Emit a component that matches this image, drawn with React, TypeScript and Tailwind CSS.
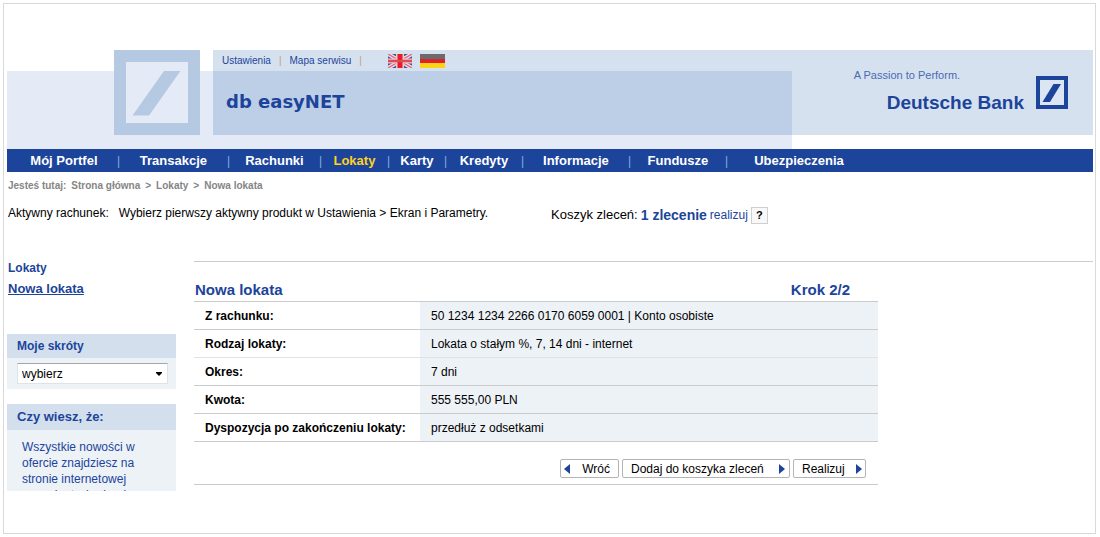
import type { ReactNode } from 'react';

const navItems = [
  { label: 'Mój Portfel', width: 'w-[113px]' },
  { label: 'Transakcje', width: 'w-[110px]' },
  { label: 'Rachunki', width: 'w-[92px]' },
  { label: 'Lokaty', width: 'w-[68px]', active: true },
  { label: 'Karty', width: 'w-[57px]' },
  { label: 'Kredyty', width: 'w-[77px]' },
  { label: 'Informacje', width: 'w-[107px]' },
  { label: 'Fundusze', width: 'w-[97px]' },
  { label: 'Ubezpieczenia', width: 'w-[142px]' },
];

const rows = [
  { label: 'Z rachunku:', value: '50 1234 1234 2266 0170 6059 0001 | Konto osobiste', line: 'border-[#cbcbcb]' },
  { label: 'Rodzaj lokaty:', value: 'Lokata o stałym %, 7, 14 dni - internet', line: 'border-[#e0e2e4]' },
  { label: 'Okres:', value: '7 dni', line: 'border-[#cbcbcb]' },
  { label: 'Kwota:', value: '555 555,00 PLN', line: 'border-[#cbcbcb]' },
  { label: 'Dyspozycja po zakończeniu lokaty:', value: 'przedłuż z odsetkami', line: 'border-[#cbcbcb]' },
];

const UkFlag = () => (
  <svg viewBox="0 0 24 14" className="h-[14px] w-6" aria-hidden="true">
    <rect width="24" height="14" fill="#4a5299" />
    <path d="M0 0L24 14M24 0L0 14" stroke="#ecdfe8" strokeWidth="4" />
    <path d="M0 0L24 14M24 0L0 14" stroke="#dc6a78" strokeWidth="1.3" />
    <path d="M12 0V14" stroke="#efc4cb" strokeWidth="8" />
    <path d="M0 7H24" stroke="#efc4cb" strokeWidth="5" />
    <path d="M12 0V14" stroke="#e02028" strokeWidth="5" />
    <path d="M0 7H24" stroke="#e04a54" strokeWidth="2.5" />
  </svg>
);

const DeFlag = () => (
  <svg viewBox="0 0 25 14" className="h-[14px] w-[25px]" aria-hidden="true">
    <rect width="25" height="5" fill="#6b6b6b" />
    <rect y="5" width="25" height="4" fill="#e0202c" />
    <rect y="9" width="25" height="5" fill="#fbd416" />
  </svg>
);

const Arrow = ({ left = false }: { left?: boolean }) => (
  <svg viewBox="0 0 6 10" className="h-[10px] w-[6px] shrink-0" aria-hidden="true">
    <path d={left ? 'M6 0V10L0 5Z' : 'M0 0V10L6 5Z'} fill="#1c449b" />
  </svg>
);

const ActionButton = ({ children, className }: { children: ReactNode; className: string }) => (
  <button
    type="button"
    className={`flex h-[19px] items-center justify-between rounded-[2px] border border-[#b4b4b4] bg-white text-black ${className}`}
  >
    {children}
  </button>
);

const Header = () => (
  <header className="grid grid-cols-[206px_579px_1fr] grid-rows-[21px_64px_14px] text-[#1c449b]">
    <div className="col-start-1 row-span-2 row-start-2 bg-[#e4ebf6]" />
    <div className="z-10 col-start-1 row-span-2 row-start-1 flex justify-end pr-[13px]">
      <svg viewBox="0 0 86 85" className="h-[85px] w-[86px]" aria-hidden="true">
        <rect width="86" height="85" fill="#b5c9e2" />
        <rect x="12" y="12" width="62" height="61" fill="#e4ebf6" />
        <path d="M50 21H66.500L35 65.500H18.500Z" fill="#b5c9e2" />
      </svg>
    </div>

    <div className="col-start-2 row-start-1 flex items-center bg-[#d6e1ef] pl-[9px] text-[10px]">
      <a href="#ustawienia">Ustawienia</a>
      <span className="mx-2 text-[#c0a080]">|</span>
      <a href="#mapa">Mapa serwisu</a>
      <span className="mx-2 text-[#c0a080]">|</span>
      <a href="#en" aria-label="English" className="ml-[18px]"><UkFlag /></a>
      <a href="#de" aria-label="Deutsch" className="ml-2"><DeFlag /></a>
    </div>
    <div className="col-start-2 row-start-2 flex items-center bg-[#bdcfe6] pb-[2px] pl-[13px] font-['DejaVu_Sans'] text-[18px] font-bold">
      db easyNET
    </div>
    <div className="col-start-2 row-start-3 bg-[#e4ebf6]" />

    <div className="col-start-3 row-span-2 row-start-1 flex justify-end gap-3 bg-[#d6e1ef] pr-[25px] pt-[18px]">
      <div className="whitespace-nowrap">
        <p className="-ml-[33px] text-[11px] leading-[14px] text-[#4a6bb3]">A Passion to Perform.</p>
        <p className="mt-[9px] text-[19px] font-bold leading-[24px]">Deutsche Bank</p>
      </div>
      <svg viewBox="0 0 32 33" className="mt-2 h-[33px] w-8" aria-hidden="true">
        <rect x="2" y="2" width="28" height="29" fill="#dce6f3" stroke="#1c449b" strokeWidth="4" />
        <path d="M17.500 8H25L14 26H6.500Z" fill="#1c449b" />
      </svg>
    </div>
  </header>
);

const NavBar = () => (
  <nav className="bg-[#1c449b]">
    <ul className="flex h-[23px] items-center text-[13px] font-bold text-white">
      {navItems.map((item, idx) => (
        <li key={item.label} className={`flex items-center ${item.width}`}>
          <a href="#nav" className={`flex-1 text-center ${item.active ? 'text-[#ffd320]' : ''} ${idx === 0 ? 'pl-1' : ''}`}>
            {item.label}
          </a>
          {idx < navItems.length - 1 && <span className="text-[12px] font-normal text-[#7fb0dc]">|</span>}
        </li>
      ))}
    </ul>
  </nav>
);

const Sidebar = () => (
  <aside className="w-[169px] shrink-0 text-[#1c449b]">
    <h2 className="pl-px font-bold leading-[14px]">Lokaty</h2>
    <a href="#nowa" className="mt-[6px] block pl-px text-[13px] font-bold leading-4 underline">Nowa lokata</a>

    <section className="mt-[37px] bg-[#edf2f7]">
      <label htmlFor="shortcuts" className="block bg-[#d3dfed] pl-[10px] font-bold leading-[24px]">Moje skróty</label>
      <div className="relative py-[5px] pl-[10px] pr-2">
        <select
          id="shortcuts"
          className="block h-[21px] w-full appearance-none border border-[#dfe3e8] border-t-[#a3a6ab] bg-white pl-1 text-[12px] text-black"
        >
          <option>wybierz</option>
        </select>
        <svg viewBox="0 0 6 4" className="pointer-events-none absolute right-[14px] top-[14px] h-1 w-[6px]" aria-hidden="true">
          <path d="M0 0H6V1L3 4L0 1Z" fill="#000" />
        </svg>
      </div>
    </section>

    <section className="mt-[15px] bg-[#edf2f7]">
      <h2 className="bg-[#d3dfed] pl-[10px] text-[13px] font-bold leading-[26px]">Czy wiesz, że:</h2>
      <p className="h-[61px] overflow-hidden px-[15px] pt-[9px] leading-4">
        Wszystkie nowości w<br />
        ofercie znajdziesz na<br />
        stronie internetowej<br />
        www.deutsche-bank
      </p>
    </section>
  </aside>
);

const Deposit = () => (
  <main className="min-w-0 flex-1 border-t border-[#cbcbcb]">
    <div className="max-w-[684px]">
      <div className="flex h-[39px] items-end justify-between pb-[2px] pl-px pr-7 text-[15px] font-bold leading-[18px] text-[#1c449b]">
        <h1>Nowa lokata</h1>
        <span>Krok 2/2</span>
      </div>
      <table className="w-full border-collapse border-y border-[#cbcbcb] text-left text-black">
        <tbody>
          {rows.map((row) => (
            <tr key={row.label} className={`h-7 border-b ${row.line}`}>
              <th scope="row" className="w-[226px] whitespace-nowrap pl-[11px] font-bold">{row.label}</th>
              <td className="bg-[#edf2f7] pl-[11px]">{row.value}</td>
            </tr>
          ))}
        </tbody>
      </table>
      <div className="flex justify-end gap-[3px] border-b border-[#cbcbcb] pb-[6px] pr-3 pt-[17px]">
        <ActionButton className="w-[59px] pl-[3px] pr-2"><Arrow left />Wróć</ActionButton>
        <ActionButton className="w-[168px] pl-2 pr-1">Dodaj do koszyka zleceń<Arrow /></ActionButton>
        <ActionButton className="w-[73px] pl-2 pr-[3px]">Realizuj<Arrow /></ActionButton>
      </div>
    </div>
  </main>
);

export default function App() {
  return (
    <div className="min-h-screen bg-white p-[3px] pr-1 font-['Liberation_Sans',Arial,sans-serif] text-[12px] leading-4">
      <div className="border border-[#d9d9d9] pb-[42px] pl-[3px] pr-[2px] pt-[46px]">
        <Header />
        <NavBar />
        <ol className="mt-[6px] flex pl-px text-[10px] font-bold text-[#858585]">
          <li className="mr-[5px]">Jesteś tutaj:</li>
          <li><a href="#home">Strona główna</a><span className="mx-[5px]">&gt;</span></li>
          <li><a href="#lokaty">Lokaty</a><span className="mx-[5px]">&gt;</span></li>
          <li>Nowa lokata</li>
        </ol>
        <div className="mt-[11px] flex h-[20px] text-black">
          <p className="w-[544px] pl-px">
            <span className="mr-[10px]">Aktywny rachunek:</span>
            Wybierz pierwszy aktywny produkt w Ustawienia &gt; Ekran i Parametry.
          </p>
          <div className="flex items-center gap-[3px] text-[#1c449b]">
            <span className="text-[13px] text-black">Koszyk zleceń:</span>
            <a href="#koszyk" className="text-[14px] font-bold">1 zlecenie</a>
            <a href="#realizuj">realizuj</a>
            <button type="button" className="h-[17px] w-[17px] border border-[#cfcfcf] bg-[#f8f8f8] text-[11px] font-bold leading-[14px] text-black">?</button>
          </div>
        </div>
        <div className="mt-[36px] flex gap-[18px]">
          <Sidebar />
          <Deposit />
        </div>
      </div>
    </div>
  );
}
